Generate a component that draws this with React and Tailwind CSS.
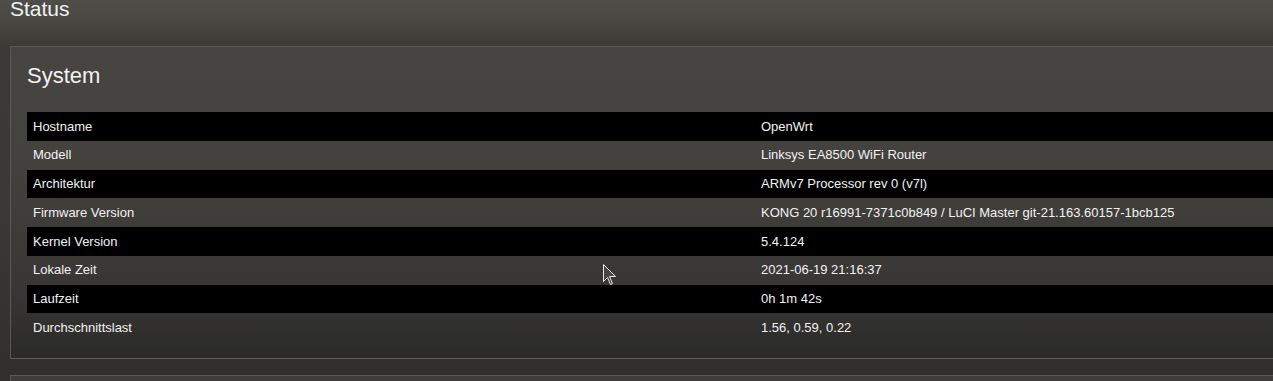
import React from "react";

const rows = [
  ["Hostname", "OpenWrt"],
  ["Modell", "Linksys EA8500 WiFi Router"],
  ["Architektur", "ARMv7 Processor rev 0 (v7l)"],
  ["Firmware Version", "KONG 20 r16991-7371c0b849 / LuCI Master git-21.163.60157-1bcb125"],
  ["Kernel Version", "5.4.124"],
  ["Lokale Zeit", "2021-06-19 21:16:37"],
  ["Laufzeit", "0h 1m 42s"],
  ["Durchschnittslast", "1.56, 0.59, 0.22"],
];

export default function App() {
  return (
    <div
      className="relative w-[1273px] h-[381px] overflow-hidden text-[#f2f2f2] bg-[linear-gradient(180deg,#4f4e4a_0px,#46453f_25px,#3b3a36_45px,#3a3935_200px,#302f2d_381px)]"
      style={{ fontFamily: '"Liberation Sans", Arial, sans-serif' }}
    >
      <h1 className="pl-[10px] text-[21px] leading-[21px] mt-[-2px] h-[48px]">Status</h1>
      <div className="ml-[10px] w-[1300px] h-[313px] border border-[#5a5955] bg-[linear-gradient(180deg,#464541_0%,#43423e_35%,#373634_80%,#2a2a28_100%)] pt-[16px] pl-[16px]">
        <h2 className="text-[22px] leading-[26px] h-[49px]">System</h2>
        <div className="flex flex-col text-[13px]">
          {rows.map(([k, v], i) => (
            <div
              key={k}
              className={`flex items-center h-[28.75px] ${i % 2 === 0 ? "bg-black" : ""}`}
            >
              <div className="w-[734px] pl-[6px] shrink-0">{k}</div>
              <div>{v}</div>
            </div>
          ))}
        </div>
      </div>
      <div className="ml-[10px] mt-[16px] w-[1300px] h-[40px] border border-[#5a5955] bg-[#3d3c38]" />
      <svg
        className="absolute left-[602px] top-[263px]"
        width="15"
        height="23"
        viewBox="0 0 15 23"
      >
        <path
          d="M1.5 1.5 L1.5 18.5 L5.5 14.5 L8.5 21.5 L10.5 20.5 L7.5 13.5 L13.5 13.5 Z"
          fill="#474643"
          stroke="#e8e8e8"
          strokeWidth="1"
          strokeLinejoin="miter"
        />
      </svg>
    </div>
  );
}
